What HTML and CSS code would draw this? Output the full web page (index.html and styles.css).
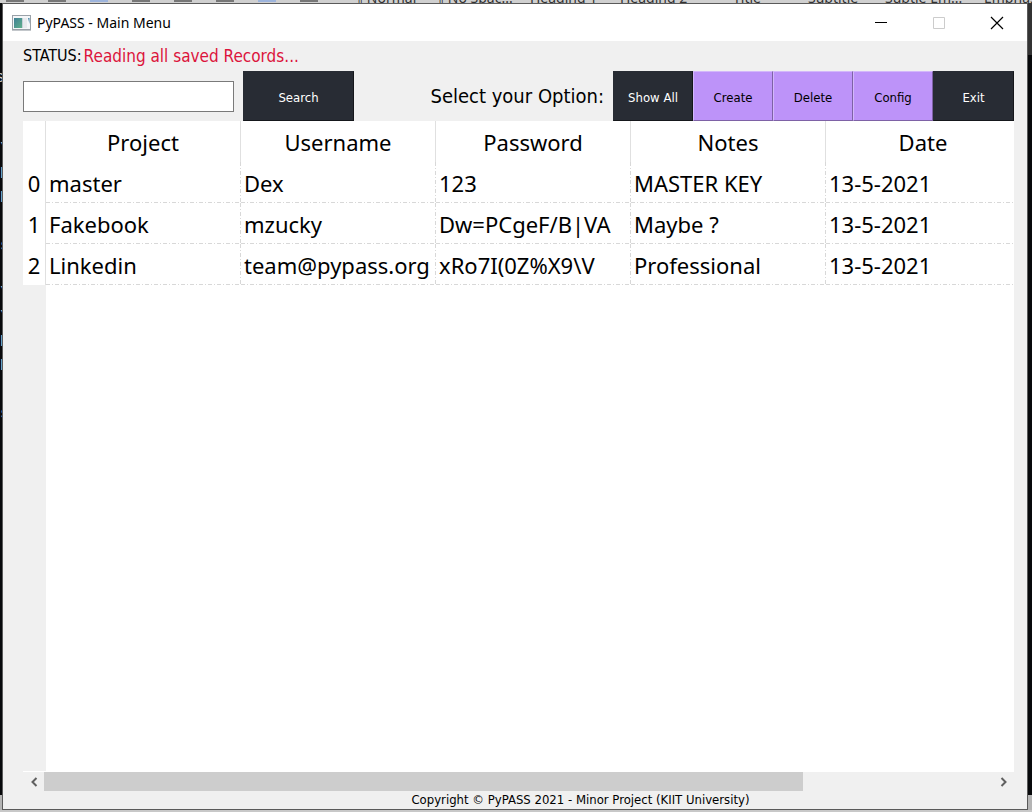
FILE: index.html
```html
<!DOCTYPE html>
<html lang="en">
<head>
<meta charset="utf-8">
<title>PyPASS - Main Menu</title>
<link rel="stylesheet" href="styles.css">
</head>
<body>
<div class="ribbon" aria-hidden="true">
  <div class="tools"><i></i><i></i><i class="lit"></i><i></i><i></i><i></i><i class="lit"></i><i></i></div>
  <span>¶ Normal</span><span>¶ No Spac...</span><span>Heading 1</span><span>Heading 2</span><span>Title</span><span>Subtitle</span><span>Subtle Em...</span><span>Emphasis</span>
</div>
<div class="desk">
  <pre class="terminal" aria-hidden="true">s
-

\
E
E
-
s

\
\
E
E
-
s</pre>
  <main class="window">
    <header class="titlebar">
      <svg class="app-icon" viewBox="0 0 19 16" aria-hidden="true">
        <defs><linearGradient id="g" x1="0" y1="0" x2="1" y2="1"><stop offset="0" stop-color="#3f7f96"/><stop offset="1" stop-color="#5fb08a"/></linearGradient></defs>
        <rect x=".5" y=".5" width="18" height="14" fill="#f4f6f8" stroke="#9aa1a8"/>
        <path d="M0 15.5h19" stroke="#c3c7cb"/>
        <rect x="2" y="3" width="8" height="10" fill="url(#g)"/>
        <path d="M10.500 3v10" stroke="#c6d0d8"/>
        <rect x="11" y="3" width="4" height="10" fill="#e7eaed"/>
        <path d="M16 3h1.500v6z" fill="#4a86a8"/>
      </svg>
      <h1>PyPASS - Main Menu</h1>
      <div class="controls">
        <button type="button" aria-label="Minimize"><svg viewBox="0 0 14 14"><path d="M1 6.500h12" stroke="#000"/></svg></button>
        <button type="button" aria-label="Maximize" disabled><svg viewBox="0 0 14 14"><path d="M1.500 1.500h11v11h-11z" fill="none" stroke="#ccc"/></svg></button>
        <button type="button" aria-label="Close"><svg viewBox="0 0 14 14"><path d="M1 1l12 12M13 1L1 13" stroke="#000" stroke-width="1.200"/></svg></button>
      </div>
    </header>
    <div class="content">
      <p class="status"><span>STATUS:</span><output>Reading all saved Records...</output></p>
      <div class="toolbar">
        <input class="query" type="text" aria-label="Search records">
        <button type="button" class="btn search">Search</button>
        <span class="prompt">Select your Option:</span>
        <div class="options">
          <button type="button" class="btn">Show All</button>
          <button type="button" class="btn violet">Create</button>
          <button type="button" class="btn violet">Delete</button>
          <button type="button" class="btn violet">Config</button>
          <button type="button" class="btn exit">Exit</button>
        </div>
      </div>
      <div class="records">
        <div class="gutter"></div>
        <table>
          <colgroup><col class="index"><col><col><col><col><col></colgroup>
          <thead><tr><td></td><th scope="col">Project</th><th scope="col">Username</th><th scope="col">Password</th><th scope="col">Notes</th><th scope="col">Date</th></tr></thead>
          <tbody>
            <tr><th scope="row">0</th><td>master</td><td>Dex</td><td>123</td><td>MASTER KEY</td><td>13-5-2021</td></tr>
            <tr><th scope="row">1</th><td>Fakebook</td><td>mzucky</td><td>Dw=PCgeF/B|VA</td><td>Maybe ?</td><td>13-5-2021</td></tr>
            <tr><th scope="row">2</th><td>Linkedin</td><td>team@pypass.org</td><td>xRo7I(0Z%X9\V</td><td>Professional</td><td>13-5-2021</td></tr>
          </tbody>
        </table>
      </div>
      <div class="scrollbar">
        <button type="button" aria-label="Scroll left"><svg viewBox="0 0 8 10"><path d="M6.500 1L2.500 5l4 4" /></svg></button>
        <div class="track"><div class="thumb"></div></div>
        <button type="button" aria-label="Scroll right"><svg viewBox="0 0 8 10"><path d="M1.500 1l4 4-4 4" /></svg></button>
      </div>
      <footer>Copyright © PyPASS 2021 - Minor Project (KIIT University)</footer>
    </div>
  </main>
  <div class="edge"></div>
</div>
<div class="bottom" aria-hidden="true"></div>
</body>
</html>
```
FILE: styles.css
```css
* { box-sizing: border-box; }
body {
  margin: 0;
  height: 100vh;
  display: flex;
  flex-direction: column;
  overflow: hidden;
  background: #c8c8c8;
  font-family: "DejaVu Sans Condensed", "DejaVu Sans", sans-serif;
  color: #000;
}
button { font: inherit; border: 0; padding: 0; background: none; }

.ribbon {
  height: 3px;
  flex: none;
  overflow: hidden;
  display: grid;
  grid-template: 3px / 354px 81px 95px 90px 113px 75px 77px 99px 1fr;
  align-items: end;
  background: #d0d0d0;
  color: #333;
  font: 14px/10px "Noto Sans", sans-serif;
  white-space: nowrap;
}
.tools { display: flex; gap: 24px; height: 3px; padding-left: 6px; }
.tools i { width: 18px; height: 2px; background: #777; }
.tools .lit { background: #9db4dc; }

.desk { flex: 1; min-height: 0; display: flex; background: linear-gradient(#333 0 52px, #08090b 52px 792px, #b4b4b4 792px); }
.terminal {
  width: 2px;
  margin: 0;
  padding-top: 63px;
  overflow: hidden;
  background: linear-gradient(#08090b 792px, #b4b4b4 792px);
  color: #ccc;
  font: 16px/24px "Liberation Mono", monospace;
  text-indent: -5px;
}
.edge { width: 4px; }
.window {
  flex: 1;
  min-width: 0;
  display: flex;
  flex-direction: column;
  border: 1px solid #5a5a5a;
  background: #f0f0f0;
}
.bottom { height: 2px; flex: none; background: #c8c8c8; }

.titlebar { display: flex; align-items: center; height: 37px; flex: none; padding: 0 1px 0 9px; background: #fff; }
.app-icon { width: 19px; height: 16px; }
.titlebar h1 { margin: 0 0 0 6px; font: 14px/20px "Noto Sans", sans-serif; }
.controls { display: flex; margin-left: auto; }
.controls button { width: 58px; height: 36px; display: grid; place-items: center; }
.controls svg { width: 14px; height: 14px; }

.content { flex: 1; min-height: 0; display: flex; flex-direction: column; padding: 0 13px 0 20px; }
.status { display: flex; align-items: center; gap: 2px; height: 29px; margin: 0 0 1px; flex: none; font-size: 16px; }
.status output { color: #dc143c; font-size: 17px; }

.toolbar { display: flex; align-items: center; flex: none; }
.query { width: 211px; height: 31px; margin-right: 9px; border: 1px solid #7a7a7a; background: #fff; font: inherit; }
.btn {
  width: 80px;
  height: 50px;
  padding-top: 2px;
  font-size: 13px;
  color: #fff;
  background: #282c34;
  border: 1px solid #282c34;
  border-right-color: #15171b;
  border-bottom-color: #15171b;
}
.btn.search { width: 111px; }
.btn.exit { width: 81px; }
.btn.violet { color: #000; background: #bd93f9; border-color: #d3b8fb #7e62a6 #7e62a6 #d3b8fb; }
.prompt { margin-left: auto; margin-right: 9px; font-size: 20px; }
.options { display: flex; }

.records { position: relative; flex: 1; min-height: 0; overflow: hidden; background: #fff; }
.gutter { position: absolute; top: 0; bottom: 1px; left: 0; width: 23px; background: #f0f0f0; }
table { position: relative; width: 998px; table-layout: fixed; border-collapse: separate; border-spacing: 0; font: 22px/30px "Noto Sans", sans-serif; }
col { width: 195px; }
col.index { width: 23px; }
tr { height: 41px; }
th, td { padding: 0; font-weight: 400; white-space: nowrap; }
thead td, thead th, tbody th { background: #fff; border-right: 1px solid #e0e0e0; }
tbody td {
  padding-left: 3px;
  background:
    repeating-linear-gradient(90deg, #d8d8d8 0 4px, transparent 4px 6px, #d8d8d8 6px 7px, transparent 7px 9px) bottom / 100% 1px no-repeat,
    repeating-linear-gradient(#d8d8d8 0 4px, transparent 4px 6px, #d8d8d8 6px 7px, transparent 7px 9px) right / 1px 100% no-repeat;
}

.scrollbar { display: flex; height: 19px; flex: none; }
.scrollbar button { width: 21px; display: grid; place-items: center; }
.scrollbar svg { width: 8px; height: 10px; fill: none; stroke: #606060; stroke-width: 2; }
.track { flex: 1; }
.thumb { width: 80%; height: 100%; background: #cdcdcd; }
footer { height: 18px; flex: none; padding-left: 124px; text-align: center; font-size: 13px; line-height: 18px; }
```
